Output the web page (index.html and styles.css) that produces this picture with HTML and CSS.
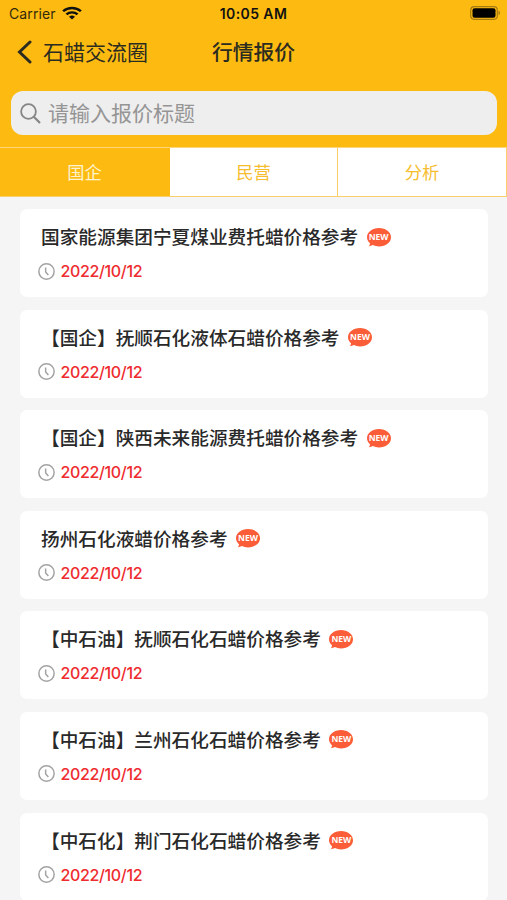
FILE: index.html
```html
<!DOCTYPE html>
<html lang="zh-CN">

<head>
    <meta charset="UTF-8">
    <meta name="viewport" content="width=device-width, initial-scale=1.0">
    <title>行情报价</title>
    <link rel="stylesheet" href="styles.css">
</head>

<body>
    <svg class="symbols" width="0" height="0">
        <symbol id="clock" viewBox="0 0 16 16">
            <circle cx="8" cy="8" r="7.2" fill="none" stroke="#a3a3a3" stroke-width="1.4" />
            <path d="M7.2 4.2v4.3l2.6 2.8" fill="none" stroke="#a3a3a3" stroke-width="1.4" />
        </symbol>
        <symbol id="bubble" viewBox="0 0 24 19">
            <path d="M12 0C18.6 0 24 4 24 9.2S18.6 18.4 12 18.4c-2.2 0-4.3-.5-6.1-1.3-1.2.7-2.5 1.100-4.100 1.200.8-.9 1.200-1.900 1.200-3.100C1.200 13.600 0 11.500 0 9.200 0 4 5.400 0 12 0z" fill="#fb5d38" />
        </symbol>
    </svg>

    <header>
        <div class="status">
            <div class="carrier">
                <span>Carrier</span>
                <svg width="20" height="14" viewBox="0 0 18 14" preserveAspectRatio="none" fill="none" stroke="#111" stroke-width="2.3">
                    <path d="M1 5.300a11.400 11.400 0 0 1 16 0" />
                    <path d="M4 8.400a7.100 7.100 0 0 1 10 0" />
                    <path d="M9 13.500l-2.700-2.700a3.800 3.800 0 0 1 5.400 0z" fill="#111" stroke="none" />
                </svg>
            </div>
            <div class="time">10:05 AM</div>
            <svg class="battery" width="31" height="14" viewBox="0 0 31 14">
                <rect x=".7" y=".7" width="26.6" height="12.6" rx="3.5" fill="none" stroke="#a67c10" stroke-width="1.2" />
                <rect x="2.5" y="2.3" width="23" height="9.4" rx="2" fill="#000" />
                <path d="M28.500 4.800c2 .6 2 3.800 0 4.400z" fill="#a67c10" />
            </svg>
        </div>

        <div class="nav">
            <div class="back">
                <svg width="15" height="24" viewBox="0 0 15 24">
                    <path d="M13 2L2.500 12 13 22" fill="none" stroke="#2b2b20" stroke-width="3" stroke-linecap="round" />
                </svg>
                <span>石蜡交流圈</span>
            </div>
            <h1>行情报价</h1>
        </div>

        <div class="search">
            <svg width="21" height="21" viewBox="0 0 21 21" fill="none" stroke="#858585" stroke-width="1.8">
                <circle cx="8.500" cy="8.500" r="7.400" />
                <path d="M13.800 13.800l6.200 6.200" stroke-width="2.2" />
            </svg>
            <span>请输入报价标题</span>
        </div>
    </header>

    <div class="tabs">
        <div class="tab active">国企</div>
        <div class="tab">民营</div>
        <div class="tab">分析</div>
    </div>

    <div class="list">
        <div class="card">
            <div class="title"><span>国家能源集团宁夏煤业费托蜡价格参考</span>
                <div class="new"><svg><use href="#bubble" /></svg><b>NEW</b></div>
            </div>
            <div class="date"><svg><use href="#clock" /></svg>2022/10/12</div>
        </div>
        <div class="card">
            <div class="title"><span>【国企】抚顺石化液体石蜡价格参考</span>
                <div class="new"><svg><use href="#bubble" /></svg><b>NEW</b></div>
            </div>
            <div class="date"><svg><use href="#clock" /></svg>2022/10/12</div>
        </div>
        <div class="card">
            <div class="title"><span>【国企】陕西未来能源费托蜡价格参考</span>
                <div class="new"><svg><use href="#bubble" /></svg><b>NEW</b></div>
            </div>
            <div class="date"><svg><use href="#clock" /></svg>2022/10/12</div>
        </div>
        <div class="card">
            <div class="title"><span>扬州石化液蜡价格参考</span>
                <div class="new"><svg><use href="#bubble" /></svg><b>NEW</b></div>
            </div>
            <div class="date"><svg><use href="#clock" /></svg>2022/10/12</div>
        </div>
        <div class="card">
            <div class="title"><span>【中石油】抚顺石化石蜡价格参考</span>
                <div class="new"><svg><use href="#bubble" /></svg><b>NEW</b></div>
            </div>
            <div class="date"><svg><use href="#clock" /></svg>2022/10/12</div>
        </div>
        <div class="card">
            <div class="title"><span>【中石油】兰州石化石蜡价格参考</span>
                <div class="new"><svg><use href="#bubble" /></svg><b>NEW</b></div>
            </div>
            <div class="date"><svg><use href="#clock" /></svg>2022/10/12</div>
        </div>
        <div class="card">
            <div class="title"><span>【中石化】荆门石化石蜡价格参考</span>
                <div class="new"><svg><use href="#bubble" /></svg><b>NEW</b></div>
            </div>
            <div class="date"><svg><use href="#clock" /></svg>2022/10/12</div>
        </div>
    </div>
</body>

</html>
```
FILE: styles.css
```css
* {
    box-sizing: border-box;
}

body {
    margin: 0;
    height: 900px;
    overflow: hidden;
    background: #f5f5f5;
    font-family: Inter, "Noto Sans CJK SC", sans-serif;
}

svg {
    display: block;
    flex: none;
}

.symbols {
    position: absolute;
}

header {
    height: 147px;
    background: #fdbb11;
}

.status {
    display: grid;
    grid-template-columns: 1fr auto 1fr;
    align-items: center;
    height: 27px;
    padding: 0 6px 0 9px;
    font-size: 14px;
    color: #111;
}

.carrier {
    display: flex;
    align-items: center;
    gap: 6px;
    color: #33290c;
}

.carrier span {
    letter-spacing: 0.1px;
}

.carrier svg {
    margin-top: -2px;
}

.time {
    font-weight: 600;
    font-size: 14px;
    letter-spacing: 0.4px;
    margin-right: 3px;
}

.battery {
    justify-self: end;
    margin-top: -1px;
}

.nav {
    display: grid;
    grid-template-columns: 1fr auto 1fr;
    align-items: center;
    height: 50px;
    padding: 0 17px;
    color: #2b2b20;
}

.back {
    display: flex;
    align-items: center;
    gap: 11px;
    font-size: 21px;
}

.back span {
    padding-bottom: 2px;
}

h1 {
    margin: 0;
    padding-bottom: 2px;
    font-size: 20.8px;
    font-weight: 500;
}

.search {
    display: flex;
    align-items: center;
    gap: 7px;
    height: 44px;
    margin: 14px 10px 0 11px;
    padding-left: 9px;
    border-radius: 12px;
    background: #eeeeee;
    color: #959595;
    font-size: 21px;
}

.search span {
    padding-bottom: 2px;
}

.tabs {
    display: grid;
    grid-template-columns: 170px 168px 169px;
    height: 50px;
    border-top: 1px solid #fdd57a;
    border-bottom: 1px solid #f9cf6b;
    background: white;
}

.tab {
    display: flex;
    align-items: center;
    justify-content: center;
    padding-bottom: 2px;
    border-right: 1px solid #f9cf6b;
    color: #f6bd2f;
    font-size: 17.3px;
}

.active {
    background: #fdbb11;
    border-right-color: #fdbb11;
    color: #fff3cf;
}

.list {
    display: flex;
    flex-direction: column;
    gap: 12.6px;
    padding: 12px 19px 0 20px;
}

.card {
    flex: none;
    height: 88px;
    padding: 14px 0 0 18px;
    border-radius: 7px;
    background: white;
}

.title {
    display: flex;
    align-items: center;
    gap: 8.5px;
    height: 28px;
    padding-left: 3px;
    color: #292929;
    font-size: 18.67px;
    font-weight: 500;
}

.title span {
    padding-bottom: 3px;
}

.new {
    position: relative;
    width: 24px;
    height: 19px;
}

.new svg {
    width: 24px;
    height: 19px;
}

.new b {
    position: absolute;
    left: 0;
    top: 0;
    width: 24px;
    line-height: 18px;
    text-align: center;
    font-family: "Open Sans", sans-serif;
    font-size: 8.5px;
    color: white;
}

.date {
    display: flex;
    align-items: center;
    gap: 5.5px;
    height: 20px;
    margin-top: 10px;
    color: #ee2b2e;
    font-size: 16px;
    font-weight: 500;
    letter-spacing: -0.35px;
}

.date svg {
    width: 17px;
    height: 17px;
}
```
